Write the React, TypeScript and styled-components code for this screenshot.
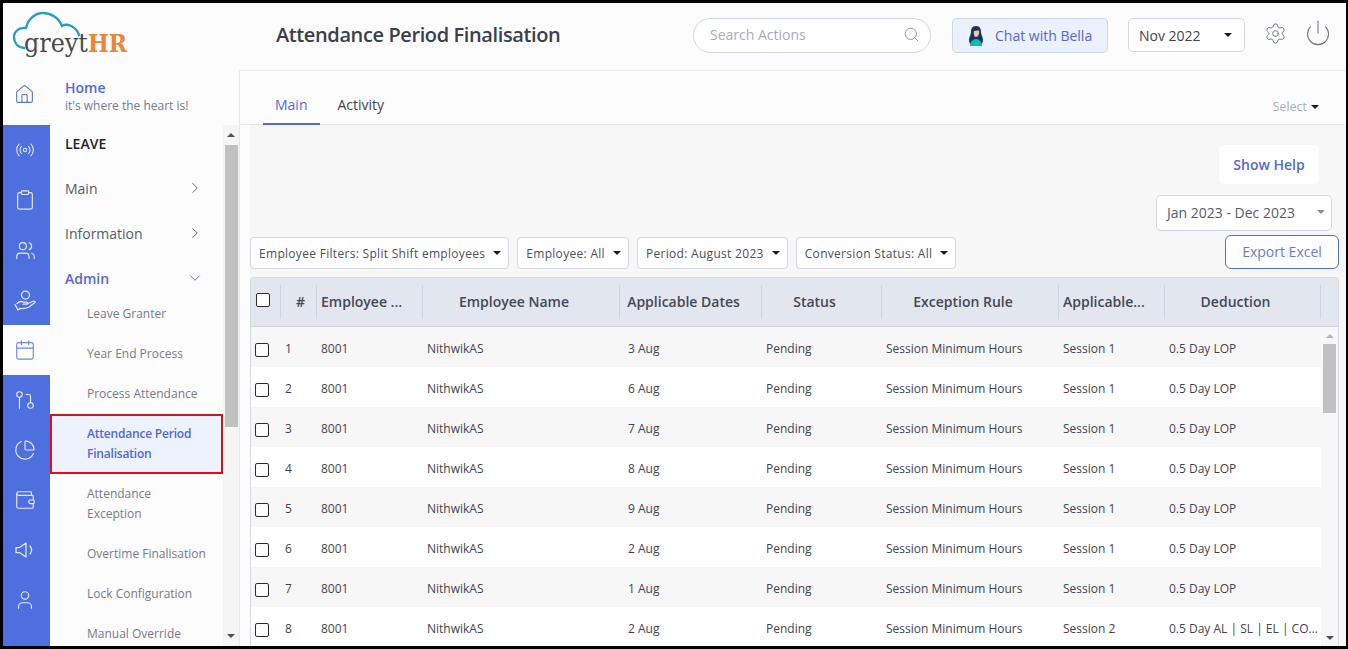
import styled, { createGlobalStyle } from 'styled-components';
import {
  Calendar,
  ChartPie,
  ChevronDown,
  ChevronRight,
  Clipboard,
  GitPullRequest,
  House,
  Power,
  Radio,
  Search,
  Settings,
  User,
  Users,
  Wallet,
} from 'lucide-react';

const GlobalStyle = createGlobalStyle`
  html, body {
    margin: 0;
    padding: 0;
    background: #000;
  }
  * {
    box-sizing: border-box;
  }
`;

const Frame = styled.div`
  width: 1348px;
  height: 649px;
  border: 3px solid #000;
  border-right-width: 2px;
  display: flex;
  flex-direction: column;
  overflow: hidden;
  background: #fcfcfd;
  font-family: 'Open Sans', 'Liberation Sans', sans-serif;
  color: #3f4450;
`;

const Header = styled.header`
  height: 67px;
  flex: none;
  display: flex;
  align-items: center;
`;

const LogoCell = styled.div`
  width: 273px;
  padding: 7px 0 0 9px;
  align-self: flex-start;
  flex: none;
`;

const Title = styled.h1`
  margin: -4px 0 0;
  width: 417px;
  flex: none;
  font-size: 20px;
  font-weight: 600;
  letter-spacing: -0.39px;
  color: #3a3f4b;
`;

const SearchBox = styled.div`
  width: 238px;
  height: 35px;
  flex: none;
  margin-top: -2px;
  border: 1px solid #d3d8e0;
  border-radius: 18px;
  background: #fff;
  display: flex;
  align-items: center;
  justify-content: space-between;
  padding: 0 10px 2px 16px;
  font-size: 14px;
  color: #a4acbb;
`;

const ChatButton = styled.div`
  width: 156px;
  height: 35px;
  flex: none;
  margin: -2px 0 0 21px;
  border: 1px solid #ccd6e8;
  border-radius: 5px;
  background: #ebf1fd;
  display: flex;
  align-items: center;
  gap: 10px;
  padding-left: 14px;
  font-size: 14px;
  color: #5468d4;
`;

const MonthSelect = styled.div`
  width: 117px;
  height: 34px;
  flex: none;
  margin: -3px 0 0 20px;
  border: 1px solid #d3d8e0;
  border-radius: 5px;
  background: #fff;
  display: flex;
  align-items: center;
  justify-content: space-between;
  padding: 0 12px 0 10px;
  font-size: 14px;
  color: #3f4450;
`;

const HeaderIcon = styled.span<{ $left: number }>`
  display: flex;
  flex: none;
  margin: -7px 0 0 ${({ $left }) => $left}px;
  color: #6b7280;
`;

const Caret = styled.span<{ $color?: string }>`
  display: inline-block;
  flex: none;
  width: 0;
  height: 0;
  border-left: 4px solid transparent;
  border-right: 4px solid transparent;
  border-top: 4px solid ${({ $color }) => $color || '#1c1c1c'};
`;

const Body = styled.div`
  flex: 1;
  min-height: 0;
  display: flex;
`;

const Sidebar = styled.aside`
  width: 236px;
  flex: none;
  display: flex;
  flex-direction: column;
`;

const HomeRow = styled.div`
  height: 55px;
  flex: none;
  display: flex;
  align-items: center;
  padding-bottom: 1px;
`;

const HomeIcon = styled.div`
  width: 47px;
  flex: none;
  display: flex;
  justify-content: center;
  color: #5a74d8;
  padding: 0 4px 5px 0;
`;

const HomeText = styled.div`
  padding-left: 15px;
`;

const HomeTitle = styled.div`
  font-size: 14px;
  line-height: 18px;
  font-weight: 600;
  color: #5468d4;
`;

const HomeSub = styled.div`
  font-size: 12px;
  line-height: 18px;
  color: #757b88;
`;

const SideBody = styled.div`
  flex: 1;
  min-height: 0;
  display: flex;
`;

const Rail = styled.nav`
  width: 47px;
  flex: none;
  background: #4e6fde;
  display: flex;
  flex-direction: column;
`;

const RailItem = styled.div<{ $active?: boolean }>`
  height: 50px;
  flex: none;
  display: flex;
  align-items: center;
  justify-content: center;
  padding-right: 3px;
  background: ${({ $active }) => ($active ? '#fcfcfd' : 'transparent')};
  color: ${({ $active }) => ($active ? '#6f88e2' : '#e4eafb')};
`;

const SideNav = styled.div`
  width: 173px;
  flex: none;
  overflow: hidden;
  background: #fcfcfd;
`;

const NavHeading = styled.div`
  padding: 9px 0 0 15px;
  height: 41px;
  font-size: 14px;
  line-height: 20px;
  font-weight: 600;
  color: #20242c;
`;

const NavGroup = styled.div<{ $open?: boolean }>`
  height: 45px;
  padding: 13px 19px 0 15px;
  display: flex;
  justify-content: space-between;
  font-size: 14px;
  line-height: 20px;
  font-weight: ${({ $open }) => ($open ? 600 : 400)};
  color: ${({ $open }) => ($open ? '#5468d4' : '#555b67')};
`;

const NavLink = styled.div<{ $active?: boolean; $tall?: boolean }>`
  height: ${({ $tall }) => ($tall ? 60 : 40)}px;
  padding: ${({ $active }) => ($active ? '8px 5px 8px 35px' : '10px 5px 10px 37px')};
  font-size: 12px;
  line-height: 20px;
  font-weight: ${({ $active }) => ($active ? 600 : 400)};
  letter-spacing: ${({ $active }) => ($active ? '-0.2px' : '0')};
  color: ${({ $active }) => ($active ? '#5468d4' : '#757b88')};
  background: ${({ $active }) => ($active ? '#edf2fd' : 'transparent')};
  border: ${({ $active }) => ($active ? '2px solid #d5121e' : 'none')};
`;

const NavLinks = styled.div`
  margin-top: -7px;
`;

const ExceptionText = styled.span`
  display: block;
  width: 80px;
`;

const ScrollTrack = styled.div<{ $width: number; $bg: string }>`
  width: ${({ $width }) => $width}px;
  flex: none;
  display: flex;
  flex-direction: column;
  align-items: center;
  background: ${({ $bg }) => $bg};
`;

const ScrollEnd = styled.div<{ $height: number }>`
  height: ${({ $height }) => $height}px;
  flex: none;
  display: flex;
  align-items: center;
  justify-content: center;
`;

const ArrowUp = styled.span<{ $color: string }>`
  width: 0;
  height: 0;
  border-left: 4px solid transparent;
  border-right: 4px solid transparent;
  border-bottom: 4px solid ${({ $color }) => $color};
`;

const ArrowDown = styled.span<{ $color: string }>`
  width: 0;
  height: 0;
  border-left: 4px solid transparent;
  border-right: 4px solid transparent;
  border-top: 4px solid ${({ $color }) => $color};
`;

const ScrollThumb = styled.div<{ $height: number }>`
  width: 13px;
  height: ${({ $height }) => $height}px;
  flex: none;
  background: #c1c1c1;
`;

const ScrollGap = styled.div`
  flex: 1;
`;

const Main = styled.main`
  flex: 1;
  min-width: 0;
  border-top: 1px solid #e6e8ed;
  border-left: 1px solid #e6e8ed;
  display: flex;
  flex-direction: column;
`;

const Tabs = styled.div`
  height: 54px;
  flex: none;
  border-bottom: 1px solid #e3e6eb;
  display: flex;
  align-items: flex-end;
  padding: 0 27px 0 23px;
  gap: 18px;
`;

const Tab = styled.div<{ $active?: boolean }>`
  height: 30px;
  padding: 0 12px;
  font-size: 14px;
  line-height: 20px;
  margin-bottom: -1px;
  color: ${({ $active }) => ($active ? '#5468d4' : '#3f4450')};
  border-bottom: 2px solid ${({ $active }) => ($active ? '#5468d4' : 'transparent')};
  padding-left: ${({ $active }) => ($active ? '12px' : '0')};
`;

const TabSelect = styled.div`
  margin-left: auto;
  height: 26px;
  display: flex;
  align-items: flex-start;
  gap: 4px;
  font-size: 12px;
  line-height: 18px;
  letter-spacing: 0.2px;
  color: #a4acbb;
  & > span {
    margin-top: 7px;
  }
`;

const Content = styled.div`
  flex: 1;
  min-height: 0;
  margin-left: 10px;
  padding-right: 7px;
  background: #f7f7f8;
  display: flex;
  flex-direction: column;
`;

const HelpButton = styled.div`
  width: 100px;
  height: 39px;
  margin: 20px 20px 0 auto;
  flex: none;
  background: #fff;
  border-radius: 5px;
  display: flex;
  align-items: center;
  justify-content: center;
  font-size: 14px;
  font-weight: 600;
  color: #5468d4;
`;

const YearSelect = styled.div`
  width: 176px;
  height: 36px;
  margin: 11px 7px 0 auto;
  flex: none;
  background: #fff;
  border: 1px solid #d3d8e0;
  border-radius: 5px;
  display: flex;
  align-items: center;
  justify-content: space-between;
  padding: 0 6px 2px 10px;
  font-size: 14px;
  color: #555b67;
`;

const FilterRow = styled.div`
  height: 34px;
  margin-top: 4px;
  flex: none;
  display: flex;
  align-items: flex-end;
  gap: 8px;
`;

const FilterChip = styled.div`
  height: 32px;
  background: #fff;
  border: 1px solid #d3d8e0;
  border-radius: 4px;
  display: flex;
  align-items: center;
  gap: 8px;
  padding: 0 7px 0 8px;
  font-size: 12px;
  letter-spacing: 0.3px;
  color: #4a4f5b;
  white-space: nowrap;
`;

const ExportButton = styled.div`
  width: 114px;
  height: 34px;
  margin-left: auto;
  background: #fff;
  border: 1px solid #5570c8;
  border-radius: 6px;
  display: flex;
  align-items: center;
  justify-content: center;
  padding-bottom: 2px;
  font-size: 14px;
  color: #6a7bd0;
`;

const Table = styled.div`
  margin-top: 8px;
  flex: 1;
  min-height: 0;
  display: flex;
  flex-direction: column;
  border: 1px solid #d5dae3;
  border-bottom: none;
  border-radius: 4px 4px 0 0;
  overflow: hidden;
`;

const COLUMNS = '30px 36px 106px 197px 142px 120px 177px 106px 156px 17px';

const HeadRow = styled.div`
  height: 49px;
  flex: none;
  background: #e2e7ef;
  border-bottom: 1px solid #cfd5df;
  display: grid;
  grid-template-columns: ${COLUMNS};
  align-items: center;
`;

const HeadCell = styled.div<{ $align?: string; $right?: number; $left?: number }>`
  height: 34px;
  padding: 0 ${({ $right }) => $right ?? 18}px 2px ${({ $left }) => $left ?? 4}px;
  display: flex;
  align-items: center;
  justify-content: ${({ $align }) => $align || 'center'};
  border-right: 1px solid #cfd5df;
  font-size: 14px;
  font-weight: 600;
  color: #444955;
  white-space: nowrap;
`;

const BodyWrap = styled.div`
  flex: 1;
  min-height: 0;
  display: flex;
`;

const Rows = styled.div`
  width: 1070px;
  flex: none;
  overflow: hidden;
`;

const Row = styled.div`
  height: 40px;
  display: grid;
  grid-template-columns: 30px 36px 106px 197px 142px 120px 177px 106px 156px;
  align-items: center;
  background: #f7f7f8;
  &:nth-child(even) {
    background: #fff;
  }
`;

const Cell = styled.div<{ $pad?: number }>`
  padding: 2px 2px 0 ${({ $pad }) => $pad ?? 4}px;
  font-size: 12px;
  color: #3f4450;
  white-space: nowrap;
  overflow: hidden;
  text-overflow: ellipsis;
`;

const Check = styled.input.attrs({ type: 'checkbox' })`
  appearance: none;
  display: block;
  width: 14px;
  height: 14px;
  margin: 0;
  background: #fff;
  border: 1.5px solid #2b2b2b;
  border-radius: 2px;
`;

const HeadCheck = styled(Check)`
  margin: 0 0 2px 5px;
`;

const RowCheck = styled(Check)`
  margin: 6px 0 0 4px;
`;

const BellaIcon = () => (
  <svg width="18" height="22" viewBox="0 0 18 22">
    <path d="M9 1C5 1 4 4 4 7c0 3-2 5-2 8 0 2 1 4 3 5h8c2-1 3-3 3-5 0-3-2-5-2-8 0-3-1-6-5-6z" fill="#17375e" />
    <path d="M7 6c2 0 4-1 5 0 .5 3-1 6-3 6S6.500 9 7 6z" fill="#f2c6ac" />
    <path d="M3 21c0-4 3-7 6-7s6 3 6 7H3z" fill="#12b8bc" />
  </svg>
);

const HandIcon = () => (
  <svg width="24" height="24" viewBox="0 0 24 24" fill="none" stroke="currentColor" strokeWidth="1.25" strokeLinecap="round" strokeLinejoin="round">
    <circle cx="12.500" cy="7" r="4" />
    <path d="M2 16.500l3 5.500 2-1.500" />
    <path d="M4 15.500c2-2 4-2.500 6-1.500h3.500c1.500 0 1.500 2.200 0 2.200H10" />
    <path d="M6.500 20.500c4 .5 7 0 9.500-1.500l6-4.500c.5-1.200-.8-1.800-2-1.200L14 16" />
  </svg>
);

const SpeakerIcon = () => (
  <svg width="24" height="24" viewBox="0 0 24 24" fill="none" stroke="currentColor" strokeWidth="1.25" strokeLinecap="round" strokeLinejoin="round">
    <path d="M3 9.500h3.500L13 5v14l-6.500-4.500H3z" />
    <path d="M17 8c2 2.500 2 5.500 0 8" />
  </svg>
);

const Logo = () => (
  <svg width="120" height="56" viewBox="0 0 120 56">
    <path
      d="M12 38C5 37 2 32 2 27C2 21 8 17 14 18C16 9 23 3 31 3C39 3 47 8 50 16C55 13 64 16 67 25"
      fill="none"
      stroke="#2a9dc4"
      strokeWidth="2.400"
      strokeLinecap="round"
    />
    <text x="12" y="42" fontFamily="'DejaVu Serif', serif" textLength="103" lengthAdjust="spacingAndGlyphs">
      <tspan fontSize="26" fill="#4a4a4c">
        greyt
      </tspan>
      <tspan fontSize="24" fontWeight="700" fill="#ec8534">
        HR
      </tspan>
    </text>
  </svg>
);

const railIcons = [
  <Radio key="radio" size={20} strokeWidth={1.25} />,
  <Clipboard key="clipboard" size={22} strokeWidth={1.25} />,
  <Users key="users" size={21} strokeWidth={1.25} />,
  <HandIcon key="hand" />,
  <Calendar key="calendar" size={22} strokeWidth={1.25} />,
  <GitPullRequest key="git" size={22} strokeWidth={1.25} />,
  <ChartPie key="pie" size={22} strokeWidth={1.25} />,
  <Wallet key="wallet" size={22} strokeWidth={1.25} />,
  <SpeakerIcon key="speaker" />,
  <User key="user" size={22} strokeWidth={1.25} />,
];

const rows = [
  ['1', '3 Aug', 'Session 1', '0.5 Day LOP'],
  ['2', '6 Aug', 'Session 1', '0.5 Day LOP'],
  ['3', '7 Aug', 'Session 1', '0.5 Day LOP'],
  ['4', '8 Aug', 'Session 1', '0.5 Day LOP'],
  ['5', '9 Aug', 'Session 1', '0.5 Day LOP'],
  ['6', '2 Aug', 'Session 1', '0.5 Day LOP'],
  ['7', '1 Aug', 'Session 1', '0.5 Day LOP'],
  ['8', '2 Aug', 'Session 2', '0.5 Day AL | SL | EL | COMP OFF'],
];

const filters = [
  'Employee Filters: Split Shift employees',
  'Employee: All',
  'Period: August 2023',
  'Conversion Status: All',
];

export default function App() {
  return (
    <>
      <GlobalStyle />
      <Frame>
        <Header>
          <LogoCell>
            <Logo />
          </LogoCell>
          <Title>Attendance Period Finalisation</Title>
          <SearchBox>
            Search Actions
            <Search size={17} strokeWidth={1.25} color="#8a909c" />
          </SearchBox>
          <ChatButton>
            <BellaIcon />
            Chat with Bella
          </ChatButton>
          <MonthSelect>
            Nov 2022
            <Caret />
          </MonthSelect>
          <HeaderIcon $left={19}>
            <Settings size={23} strokeWidth={1} />
          </HeaderIcon>
          <HeaderIcon $left={17}>
            <Power size={28} strokeWidth={0.9} />
          </HeaderIcon>
        </Header>
        <Body>
          <Sidebar>
            <HomeRow>
              <HomeIcon>
                <House size={21} strokeWidth={1.25} />
              </HomeIcon>
              <HomeText>
                <HomeTitle>Home</HomeTitle>
                <HomeSub>it's where the heart is!</HomeSub>
              </HomeText>
            </HomeRow>
            <SideBody>
              <Rail>
                {railIcons.map((icon, i) => (
                  <RailItem key={i} $active={i === 4}>
                    {icon}
                  </RailItem>
                ))}
              </Rail>
              <SideNav>
                <NavHeading>LEAVE</NavHeading>
                <NavGroup>
                  Main
                  <ChevronRight size={18} strokeWidth={1.25} />
                </NavGroup>
                <NavGroup>
                  Information
                  <ChevronRight size={18} strokeWidth={1.25} />
                </NavGroup>
                <NavGroup $open>
                  Admin
                  <ChevronDown size={18} strokeWidth={1.25} />
                </NavGroup>
                <NavLinks>
                  <NavLink>Leave Granter</NavLink>
                  <NavLink>Year End Process</NavLink>
                  <NavLink>Process Attendance</NavLink>
                  <NavLink $active $tall>
                    Attendance Period Finalisation
                  </NavLink>
                  <NavLink $tall>
                    <ExceptionText>Attendance Exception</ExceptionText>
                  </NavLink>
                  <NavLink>Overtime Finalisation</NavLink>
                  <NavLink>Lock Configuration</NavLink>
                  <NavLink>Manual Override</NavLink>
                </NavLinks>
              </SideNav>
              <ScrollTrack $width={16} $bg="#f5f5f5">
                <ScrollEnd $height={20}>
                  <ArrowUp $color="#505050" />
                </ScrollEnd>
                <ScrollThumb $height={282} />
                <ScrollGap />
                <ScrollEnd $height={20}>
                  <ArrowDown $color="#505050" />
                </ScrollEnd>
              </ScrollTrack>
            </SideBody>
          </Sidebar>
          <Main>
            <Tabs>
              <Tab $active>Main</Tab>
              <Tab>Activity</Tab>
              <TabSelect>
                Select
                <Caret />
              </TabSelect>
            </Tabs>
            <Content>
              <HelpButton>Show Help</HelpButton>
              <YearSelect>
                Jan 2023 - Dec 2023
                <Caret $color="#8a8f99" />
              </YearSelect>
              <FilterRow>
                {filters.map((f) => (
                  <FilterChip key={f}>
                    {f}
                    <Caret />
                  </FilterChip>
                ))}
                <ExportButton>Export Excel</ExportButton>
              </FilterRow>
              <Table>
                <HeadRow>
                  <HeadCell $align="flex-start" $left={0} $right={0}>
                    <HeadCheck />
                  </HeadCell>
                  <HeadCell $right={0}>#</HeadCell>
                  <HeadCell $align="flex-start" $right={4}>
                    Employee ...
                  </HeadCell>
                  <HeadCell>Employee Name</HeadCell>
                  <HeadCell>Applicable Dates</HeadCell>
                  <HeadCell>Status</HeadCell>
                  <HeadCell>Exception Rule</HeadCell>
                  <HeadCell $align="flex-start" $right={4}>
                    Applicable...
                  </HeadCell>
                  <HeadCell>Deduction</HeadCell>
                </HeadRow>
                <BodyWrap>
                  <Rows>
                    {rows.map(([num, date, session, deduction]) => (
                      <Row key={num}>
                        <RowCheck />
                        <Cell>{num}</Cell>
                        <Cell>8001</Cell>
                        <Cell>NithwikAS</Cell>
                        <Cell $pad={8}>{date}</Cell>
                        <Cell>Pending</Cell>
                        <Cell>Session Minimum Hours</Cell>
                        <Cell>{session}</Cell>
                        <Cell>{deduction}</Cell>
                      </Row>
                    ))}
                  </Rows>
                  <ScrollTrack $width={17} $bg="#f7f7f8">
                    <ScrollEnd $height={17}>
                      <ArrowUp $color="#b5b5b5" />
                    </ScrollEnd>
                    <ScrollThumb $height={69} />
                    <ScrollGap />
                    <ScrollEnd $height={17}>
                      <ArrowDown $color="#505050" />
                    </ScrollEnd>
                  </ScrollTrack>
                </BodyWrap>
              </Table>
            </Content>
          </Main>
        </Body>
      </Frame>
    </>
  );
}
